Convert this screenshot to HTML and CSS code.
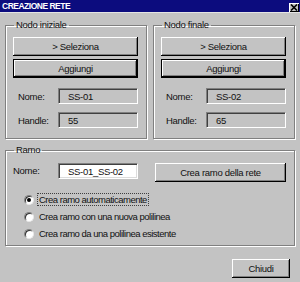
FILE: index.html
```html
<!DOCTYPE html>
<html lang="it">
<head>
  <meta charset="UTF-8">
  <title>Creazione rete</title>
  <link rel="stylesheet" href="styles.css">
</head>
<body>
  <div class="titlebar">
    <span class="title">CREAZIONE RETE</span>
    <span class="close">
      <svg width="8" height="7" viewBox="0 0 8 7"><path d="M1 0.5 L7 6.5 M7 0.5 L1 6.5" stroke="#000" stroke-width="1.6"/></svg>
    </span>
  </div>

  <div class="content">
    <div class="nodes">
      <fieldset class="group">
        <legend>Nodo iniziale</legend>
        <div class="inner">
          <button class="btn">&gt; Seleziona</button>
          <button class="btn default">Aggiungi</button>
          <div class="field-row first">
            <label>Nome:</label>
            <span class="field">SS-01</span>
          </div>
          <div class="field-row">
            <label>Handle:</label>
            <span class="field">55</span>
          </div>
        </div>
      </fieldset>

      <fieldset class="group">
        <legend>Nodo finale</legend>
        <div class="inner">
          <button class="btn">&gt; Seleziona</button>
          <button class="btn default">Aggiungi</button>
          <div class="field-row first">
            <label>Nome:</label>
            <span class="field">SS-02</span>
          </div>
          <div class="field-row">
            <label>Handle:</label>
            <span class="field">65</span>
          </div>
        </div>
      </fieldset>
    </div>

    <fieldset class="group ramo">
      <legend>Ramo</legend>
      <div class="inner">
        <div class="ramo-row">
          <label>Nome:</label>
          <span class="field white">SS-01_SS-02</span>
          <button class="btn crea">Crea ramo della rete</button>
        </div>
        <ul class="radios">
          <li><span class="radio checked"></span><span class="focus">Crea ramo automaticamente</span></li>
          <li><span class="radio"></span><span class="text">Crea ramo con una nuova polilinea</span></li>
          <li><span class="radio"></span><span class="text">Crea ramo da una polilinea esistente</span></li>
        </ul>
      </div>
    </fieldset>

    <div class="footer">
      <button class="btn chiudi">Chiudi</button>
    </div>
  </div>
</body>
</html>
```

FILE: styles.css
```css
body {
  margin: 0;
  width: 300px;
  height: 282px;
  overflow: hidden;
  background-color: #c3c3c3;
  font-family: 'Liberation Sans', Arial, sans-serif;
  font-size: 9.5px;
  letter-spacing: -0.3px;
  color: #111;
}

.titlebar {
  height: 12px;
  background-color: #0c0c7e;
  display: flex;
  align-items: center;
  justify-content: space-between;
  padding: 0 1px 0 2px;
  border-bottom: 1px solid #e4e4e4;
}
.title {
  color: #fff;
  font-weight: bold;
  font-size: 8.5px;
  letter-spacing: -0.5px;
}
.close {
  width: 10px;
  height: 9px;
  margin-top: 2px;
  background-color: #c3c3c3;
  box-shadow: inset 1px 1px #fff, inset -1px -1px #000;
  display: flex;
  align-items: center;
  justify-content: center;
}

.content {
  padding: 7px 5px 0 5px;
}

.nodes {
  display: flex;
  gap: 6px;
}

.group {
  margin: 0;
  padding: 0;
  min-width: 0;
  border: 1px solid #808080;
  box-shadow: 1px 1px 0 #fff, inset 1px 1px 0 #fff;
}
.nodes .group {
  width: 142px;
  box-sizing: border-box;
}
.group legend {
  margin-left: 8px;
  padding: 0 2px;
  line-height: 10px;
}
.inner {
  padding: 7px 8px 10px 7px;
  display: flex;
  flex-direction: column;
}

.btn {
  font-family: inherit;
  font-size: 9.5px;
  letter-spacing: -0.3px;
  color: #111;
  height: 19px;
  padding: 0;
  border: none;
  background-color: #c3c3c3;
  box-shadow: inset -1px -1px #000, inset 1px 1px #fff, inset -2px -2px #808080;
}
.btn + .btn {
  margin-top: 3px;
}
.btn.default {
  border: 1px solid #000;
}

.field-row {
  display: flex;
  align-items: center;
  padding-left: 5px;
  margin-top: 8px;
}
.field-row.first {
  margin-top: 10px;
}
.field-row label,
.ramo-row label {
  width: 40px;
}
.field {
  flex: 1;
  height: 16px;
  line-height: 16px;
  box-sizing: border-box;
  padding-left: 9px;
  border: 1px solid;
  border-color: #808080 #fff #fff #808080;
  box-shadow: inset 1px 1px #404040;
}
.field.white {
  flex: none;
  width: 80px;
  background-color: #fff;
  box-shadow: inset 1px 1px #404040, inset -1px -1px #dcdcdc;
}

.ramo {
  margin-top: 6px;
}
.ramo .inner {
  padding: 8px 8px 3px 7px;
}
.ramo-row {
  display: flex;
  align-items: flex-start;
}
.ramo-row label {
  width: 45px;
  line-height: 16px;
}
.btn.crea {
  width: 131px;
  margin-left: 17px;
}

.radios {
  list-style-type: none;
  margin: 9px 0 0 0;
  padding: 0 0 0 11px;
  letter-spacing: -0.5px;
}
.radios li {
  height: 17px;
  display: flex;
  align-items: center;
}
.radio {
  position: relative;
  width: 10px;
  height: 10px;
  box-sizing: border-box;
  border-radius: 50%;
  background-color: #fff;
  border: 1px solid;
  border-color: #808080 #e8e8e8 #e8e8e8 #808080;
  box-shadow: inset 1px 1px #303030;
  margin-right: 3px;
}
.radio.checked::after {
  content: '';
  position: absolute;
  left: 2px;
  top: 2px;
  width: 4px;
  height: 4px;
  border-radius: 50%;
  background-color: #000;
}
.focus {
  border: 1px dotted #404040;
  padding: 0 1px;
  line-height: 11px;
}
.text {
  padding-left: 2px;
}

.footer {
  display: flex;
  justify-content: flex-end;
  padding-right: 5px;
  margin-top: 13px;
}
.btn.chiudi {
  width: 58px;
}
```
